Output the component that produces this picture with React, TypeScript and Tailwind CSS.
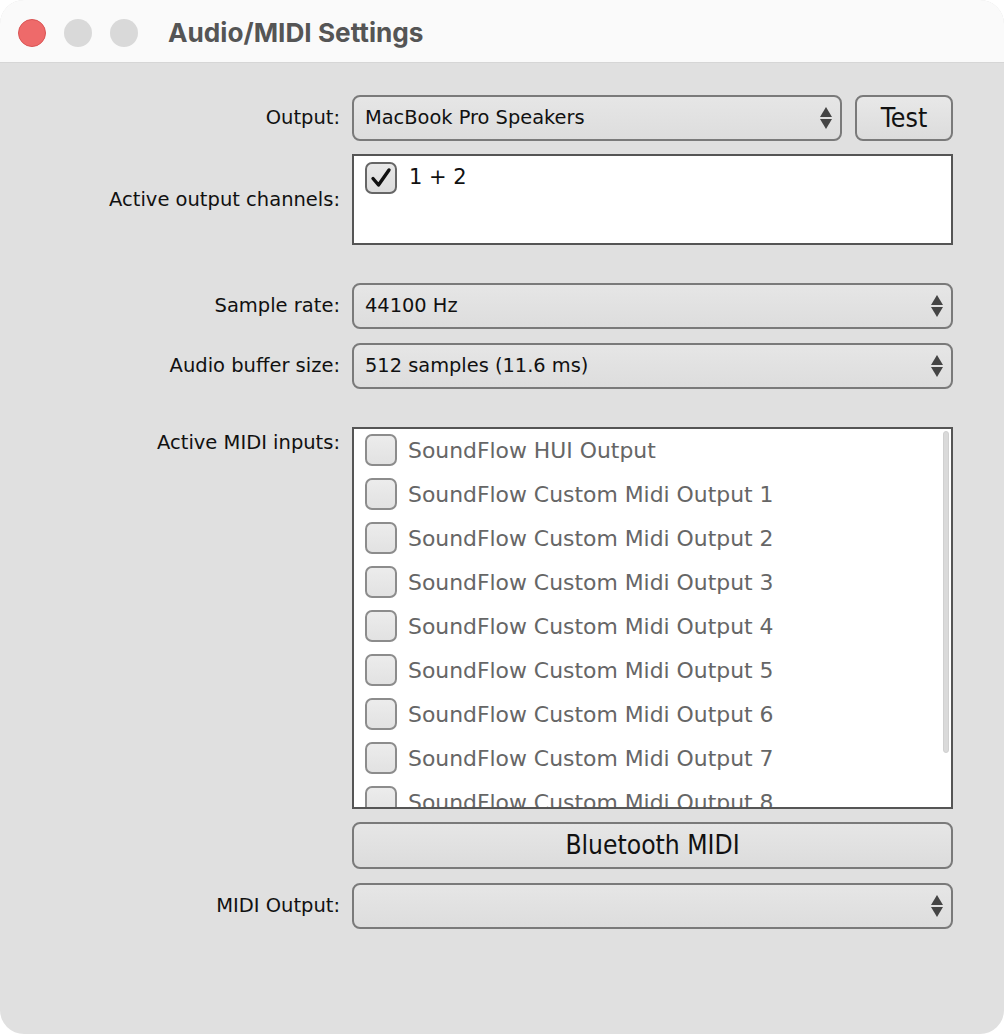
import React from "react";

const ui = { fontFamily: '"DejaVu Sans", Verdana, sans-serif' };
const narrow = {
  fontFamily: '"DejaVu Sans Condensed", "Liberation Sans Narrow", "DejaVu Sans", sans-serif',
};

const midiInputs = [
  "SoundFlow HUI Output",
  "SoundFlow Custom Midi Output 1",
  "SoundFlow Custom Midi Output 2",
  "SoundFlow Custom Midi Output 3",
  "SoundFlow Custom Midi Output 4",
  "SoundFlow Custom Midi Output 5",
  "SoundFlow Custom Midi Output 6",
  "SoundFlow Custom Midi Output 7",
  "SoundFlow Custom Midi Output 8",
];

function Arrows() {
  return (
    <svg width="14" height="24" viewBox="0 0 14 24" className="shrink-0">
      <path d="M7 1 L13 11 L1 11 Z" fill="#454545" />
      <path d="M1 13 L13 13 L7 23 Z" fill="#454545" />
    </svg>
  );
}

function Combo({ value }: { value?: string }) {
  return (
    <div className="flex h-[46px] flex-1 items-center justify-between rounded-[8px] border-2 border-[#7a7a7a] bg-gradient-to-b from-[#e6e6e6] to-[#dddddd] pl-[11px] pr-[7px]">
      <span className="text-[19.4px] text-[#111]" style={ui}>
        {value}
      </span>
      <Arrows />
    </div>
  );
}

function Label({ children, top }: { children: React.ReactNode; top?: boolean }) {
  return (
    <div
      className={`flex w-[340px] shrink-0 justify-end text-[19.5px] text-[#111] ${
        top ? "items-start pt-[1px]" : "items-center"
      }`}
      style={ui}
    >
      {children}
    </div>
  );
}

function Check({ checked, dim }: { checked?: boolean; dim?: boolean }) {
  return (
    <div
      className={`flex h-[32px] w-[32px] shrink-0 items-center justify-center rounded-[7px] border-2 bg-gradient-to-b ${
        dim
          ? "border-[#8c8c8c] from-[#ececec] to-[#e2e2e2]"
          : "border-[#666] from-[#e8e8e8] to-[#dcdcdc]"
      }`}
    >
      {checked && (
        <svg width="22" height="22" viewBox="0 0 22 22">
          <path
            d="M3 11.5 L8.5 18 L19 3"
            fill="none"
            stroke="#111"
            strokeWidth="3.4"
            strokeLinecap="round"
            strokeLinejoin="round"
          />
        </svg>
      )}
    </div>
  );
}

export default function App() {
  return (
    <div className="h-[1034px] w-[1004px] overflow-hidden rounded-[24px] bg-[#e0e0e0]">
      <div className="flex h-[63px] items-center border-b border-[#d6d6d6] bg-[#fafafa] pt-[3px]">
        <div className="ml-[18px] flex gap-[18px]">
          <span className="h-[28px] w-[28px] rounded-full border border-[#d95454] bg-[#ee6a6a]" />
          <span className="h-[28px] w-[28px] rounded-full bg-[#d9d9d9]" />
          <span className="h-[28px] w-[28px] rounded-full bg-[#d9d9d9]" />
        </div>
        <span
          className="ml-[30px] text-[26.2px] font-bold text-[#555]"
          style={{ fontFamily: 'Inter, "Open Sans", sans-serif' }}
        >
          Audio/MIDI Settings
        </span>
      </div>

      <div className="flex flex-col pr-[51px] pt-[32px]">
        <div className="flex gap-[12px]">
          <Label>Output:</Label>
          <Combo value="MacBook Pro Speakers" />
          <button
            className="ml-[1px] h-[46px] w-[98px] rounded-[8px] border-2 border-[#7a7a7a] bg-gradient-to-b from-[#e8e8e8] to-[#dcdcdc] text-[26.5px] text-[#111]"
            style={narrow}
          >
            Test
          </button>
        </div>

        <div className="mt-[13px] flex gap-[12px]">
          <Label>Active output channels:</Label>
          <div className="h-[91px] flex-1 border-2 border-[#555] bg-white pl-[11px] pt-[6px]">
            <div className="flex items-center gap-[12px]">
              <Check checked />
              <span className="text-[21px] text-[#111]" style={ui}>
                1 + 2
              </span>
            </div>
          </div>
        </div>

        <div className="mt-[38px] flex gap-[12px]">
          <Label>Sample rate:</Label>
          <Combo value="44100 Hz" />
        </div>

        <div className="mt-[14px] flex gap-[12px]">
          <Label>Audio buffer size:</Label>
          <Combo value="512 samples (11.6 ms)" />
        </div>

        <div className="mt-[38px] flex gap-[12px]">
          <Label top>Active MIDI inputs:</Label>
          <div className="relative h-[382px] flex-1 overflow-hidden border-2 border-[#555] bg-white pl-[11px] pt-[5px]">
            <div className="flex flex-col">
              {midiInputs.map((name) => (
                <div key={name} className="flex h-[44px] shrink-0 items-start gap-[11px]">
                  <Check dim />
                  <span className="text-[21.9px] leading-[33px] text-[#666]" style={ui}>
                    {name}
                  </span>
                </div>
              ))}
            </div>
            <div className="absolute right-[2px] top-[2px] h-[322px] w-[6px] rounded-full border border-[#d0d0d0] bg-[#dadada]" />
          </div>
        </div>

        <div className="mt-[13px] flex gap-[12px]">
          <div className="w-[340px] shrink-0" />
          <button
            className="h-[47px] flex-1 rounded-[8px] border-2 border-[#7a7a7a] bg-gradient-to-b from-[#e6e6e6] to-[#dcdcdc] text-[26.2px] text-[#111]"
            style={narrow}
          >
            Bluetooth MIDI
          </button>
        </div>

        <div className="mt-[14px] flex gap-[12px]">
          <Label>MIDI Output:</Label>
          <Combo />
        </div>
      </div>
    </div>
  );
}
